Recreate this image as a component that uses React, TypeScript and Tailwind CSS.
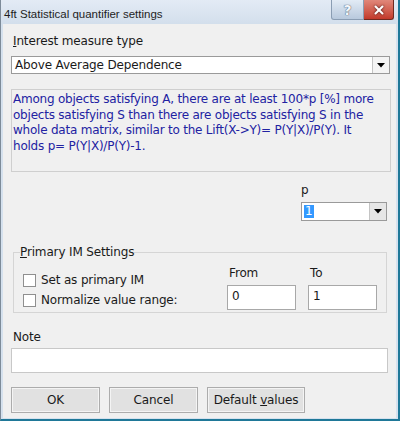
import { X } from 'lucide-react';

const font = { fontFamily: '"DejaVu Sans", "Liberation Sans", sans-serif' };

function ComboArrow() {
  return (
    <svg width="8" height="5" viewBox="0 0 8 5">
      <path d="M0 0 H8 L4 4.5 Z" fill="#000" />
    </svg>
  );
}

function Check({ label }: { label: string }) {
  return (
    <div className="flex h-[20px] items-center">
      <span className="ml-[3px] h-[13px] w-[13px] border border-[#8f8f8f] bg-white" />
      <span className="ml-[5px] text-[12px] leading-[16px] tracking-[-0.15px] text-[#1a1a1a]">{label}</span>
    </div>
  );
}

function Btn({ children, w }: { children: React.ReactNode; w: string }) {
  return (
    <button
      className={`${w} h-[26px] border border-[#acacac] bg-[#e1e1e1] text-[12px] tracking-[-0.15px] text-[#1a1a1a] shadow-[inset_0_0_0_1px_#f4f4f4]`}
    >
      {children}
    </button>
  );
}

export default function App() {
  return (
    <div className="flex h-[421px] w-[400px] flex-col overflow-hidden border-b-2 border-r-2 border-l border-[#1f7898] border-l-[#7d8b99] bg-[#d5e1ee]" style={font}>
      {/* title bar */}
      <div className="flex h-[24px] items-start bg-gradient-to-b from-[#e3ebf5] to-[#d3dfec]">
        <span className="mt-[6px] ml-[3px] text-[11.5px] leading-[16px] text-[#1e1e1e]" style={{ fontFamily: '"Liberation Sans", sans-serif' }}>
          4ft Statistical quantifier settings
        </span>
        <div className="ml-auto mr-[4px] flex">
          <div className="flex h-[20px] w-[33px] items-center justify-center rounded-bl-[3px] border border-t-0 border-[#8a9db3] bg-gradient-to-b from-[#e2ebf5] to-[#b8c9dd]">
            <span className="text-[14px] font-bold leading-none text-[#f4f7fb] [text-shadow:0_0_1px_#4a5a70,0_0_1px_#4a5a70]">?</span>
          </div>
          <div className="flex h-[20px] w-[30px] items-center justify-center rounded-br-[3px] border border-t-0 border-l-0 border-[#6e2a20] bg-gradient-to-b from-[#e0877a] to-[#c2382a]">
            <X size={14} strokeWidth={3.5} className="text-white drop-shadow-[0_0_1px_#3a1010]" />
          </div>
        </div>
      </div>

      {/* client area */}
      <div className="mx-[2px] mb-[1px] flex flex-1 flex-col bg-[#f0f0f0] pl-[8px] tracking-[-0.15px]">
        <div className="mt-[9px] ml-[2px] text-[12px] leading-[16px] text-[#1a1a1a]">
          <span className="underline">I</span>nterest measure type
        </div>

        <div className="mt-[7px] flex h-[18px] w-[379px] border border-[#9a9a9a] bg-white">
          <span className="pl-[3px] text-[12px] leading-[16px] text-[#1a1a1a]">Above Average Dependence</span>
          <div className="ml-auto flex w-[17px] items-center justify-center border-l border-[#c4c4c4] bg-[#f4f4f4]">
            <ComboArrow />
          </div>
        </div>

        <div className="mt-[15px] h-[83px] w-[380px] border border-[#cfcfcf] bg-[#f0f0f0] pt-[2px] pl-[1px] text-[12px] leading-[15.5px] tracking-[-0.22px] text-[#2222a2]">
          <div>Among objects satisfying A, there are at least 100*p [%] more</div>
          <div>objects satisfying S than there are objects satisfying S in the</div>
          <div>whole data matrix, similar to the Lift(X-&gt;Y)= P(Y|X)/P(Y). It</div>
          <div>holds p= P(Y|X)/P(Y)-1.</div>
        </div>

        <div className="ml-[290px] mt-[10px] text-[12px] leading-[16px] text-[#1a1a1a]">p</div>
        <div className="ml-[290px] mt-[4px] flex h-[19px] w-[86px] border border-[#9a9a9a] bg-white">
          <span className="mt-[2px] ml-[2px] h-[13px] bg-[#3399ff] px-[1px] text-[12px] leading-[13px] text-white">1</span>
          <div className="ml-auto flex w-[17px] items-center justify-center border-l border-[#c4c4c4] bg-[#e6e6e6]">
            <ComboArrow />
          </div>
        </div>

        <fieldset className="mt-[23px] ml-[2px] w-[374px] border border-[#d5d5d5] px-[6px] pb-[2px]">
          <legend className="text-[12px] leading-[16px] text-[#1a1a1a]">
            <span className="underline">P</span>rimary IM Settings
          </legend>
          <div className="flex">
            <div className="mt-[10px] w-[207px]">
              <Check label="Set as primary IM" />
              <Check label="Normalize value range:" />
            </div>
            <div className="mt-[5px] flex gap-[12px]">
              <div className="flex w-[69px] flex-col">
                <span className="ml-[2px] text-[12px] leading-[16px] text-[#1a1a1a]">From</span>
                <div className="mt-[4px] h-[25px] border border-[#a8a8a8] bg-white pl-[4px] text-[12px] leading-[20px] text-[#1a1a1a]">0</div>
              </div>
              <div className="flex w-[69px] flex-col">
                <span className="ml-[2px] text-[12px] leading-[16px] text-[#1a1a1a]">To</span>
                <div className="mt-[4px] h-[25px] border border-[#a8a8a8] bg-white pl-[4px] text-[12px] leading-[20px] text-[#1a1a1a]">1</div>
              </div>
            </div>
          </div>
        </fieldset>

        <div className="mt-[16px] ml-[2px] text-[12px] leading-[16px] text-[#1a1a1a]">Note</div>
        <div className="mt-[3px] h-[25px] w-[377px] border border-[#c8c8c8] bg-white" />

        <div className="mt-[14px] flex gap-[9px]">
          <Btn w="w-[89px]">OK</Btn>
          <Btn w="w-[89px]">Cancel</Btn>
          <Btn w="w-[98px]">
            Default <span className="underline">v</span>alues
          </Btn>
        </div>
      </div>
    </div>
  );
}
